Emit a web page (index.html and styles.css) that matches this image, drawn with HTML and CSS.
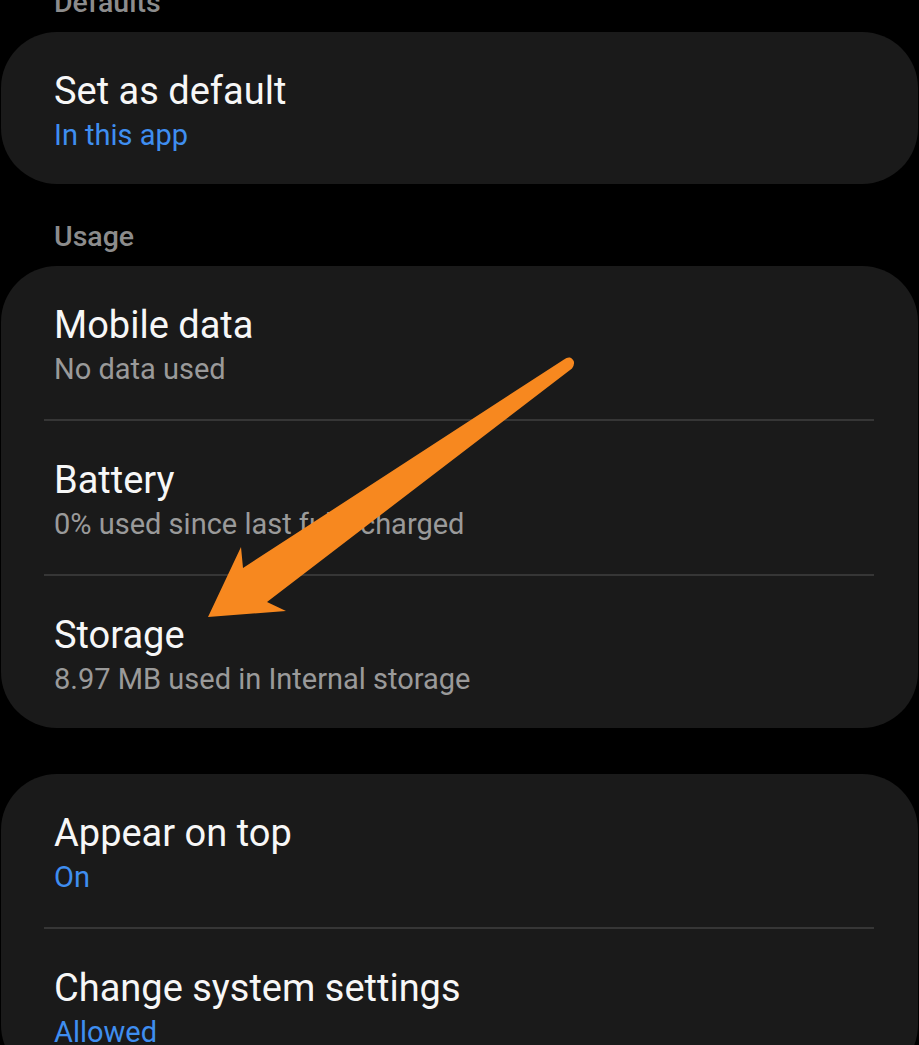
FILE: index.html
```html
<!DOCTYPE html>
<html lang="en">
<head>
<meta charset="utf-8">
<title>App info</title>
<link rel="stylesheet" href="styles.css">
</head>
<body>
<div class="page">
  <div class="section-label first">Defaults</div>
  <div class="card">
    <div class="row">
      <div class="title">Set as default</div>
      <div class="sub blue">In this app</div>
    </div>
  </div>

  <div class="section-label">Usage</div>
  <div class="card">
    <div class="row">
      <div class="title">Mobile data</div>
      <div class="sub">No data used</div>
    </div>
    <div class="divider"></div>
    <div class="row">
      <div class="title">Battery</div>
      <div class="sub">0% used since last fully charged</div>
    </div>
    <div class="divider"></div>
    <div class="row">
      <div class="title">Storage</div>
      <div class="sub">8.97 MB used in Internal storage</div>
    </div>
  </div>

  <div class="card spaced">
    <div class="row">
      <div class="title">Appear on top</div>
      <div class="sub blue">On</div>
    </div>
    <div class="divider"></div>
    <div class="row">
      <div class="title">Change system settings</div>
      <div class="sub blue">Allowed</div>
    </div>
  </div>

  <svg class="arrow" width="919" height="1045" viewBox="0 0 919 1045" aria-hidden="true">
    <path d="M 564 359.5 L 243 568 L 241 547 L 208 617 L 286 611 L 267 602 L 572 368.5 Q 577 361 570 357.5 Q 567 357 564 359.5 Z" fill="#f7881f"/>
  </svg>
</div>
</body>
</html>
```

FILE: styles.css
```css
html, body {
  margin: 0;
  padding: 0;
  background: #000;
}

body {
  font-family: Roboto, "Noto Sans", "Liberation Sans", sans-serif;
  color: #f5f5f5;
  overflow: hidden;
  height: 1045px;
}

.page {
  position: relative;
  width: 919px;
  display: flow-root;
}

.section-label {
  height: 82px;
  box-sizing: border-box;
  padding: 36px 0 0 54px;
  font-size: 28.5px;
  line-height: 34px;
  font-weight: 500;
  color: #8c8c8c;
}

.section-label.first {
  margin-top: -50px;
}

.card {
  background: #1a1a1a;
  border-radius: 56px;
  margin: 0 1px 0 1px;
  display: flex;
  flex-direction: column;
}

.card.spaced {
  margin-top: 46px;
}

.row {
  height: 153px;
  box-sizing: border-box;
  padding: 39px 0 0 53px;
  display: flex;
  flex-direction: column;
  gap: 7px;
}

.card .row:last-child {
  height: 152px;
}

.title {
  font-size: 38px;
  line-height: 40px;
  color: #f7f7f7;
}

.sub {
  font-size: 29px;
  line-height: 34px;
  color: #9a9a9a;
}

.sub.blue {
  color: #3f8ef0;
}

.divider {
  height: 2px;
  background: #363636;
  margin: 0 44px 0 43px;
}

.arrow {
  position: absolute;
  left: 0;
  top: 0;
  pointer-events: none;
}
```
